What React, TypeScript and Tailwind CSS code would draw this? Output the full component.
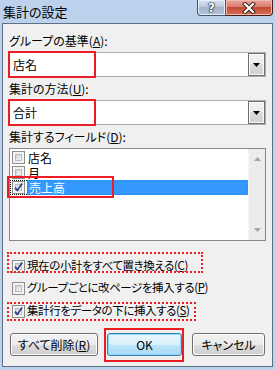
import React from "react";

const Box = ({ checked }: { checked?: boolean }) => (
  <span className="relative inline-block w-[13px] h-[13px] shrink-0 border border-[#8e8f8f] bg-[#f4f4f4] p-[2px]">
    <span className="block w-full h-full border border-[#b8bcc2] bg-gradient-to-br from-[#cfd2d6] to-[#f7f7f7]" />
    {checked && (
      <svg className="absolute left-[0px] top-[0px]" width="11" height="11" viewBox="0 0 11 11">
        <path d="M2 5.6 L4.3 8.4 L9.2 1.6" stroke="#2e3e86" strokeWidth="1.7" fill="none" />
      </svg>
    )}
  </span>
);

const Combo = ({ value }: { value: string }) => (
  <div className="relative h-[25px] border border-[#abadb3] bg-white flex items-center">
    <span className="pl-[3px] leading-[16px]">{value}</span>
    <div className="ml-auto h-full w-[17px] border border-[#707070] bg-[linear-gradient(#f2f2f2,#ebebeb_50%,#dddddd_50%,#cfcfcf)] shadow-[inset_0_0_0_1px_#fbfbfb] flex items-center justify-center">
      <svg width="7" height="4" viewBox="0 0 7 4">
        <path d="M0 0 H7 L3.5 4 Z" fill="#000" />
      </svg>
    </div>
    <div className="absolute left-[-2px] top-[-2px] w-[88px] h-[27px] border-2 border-[#ec1c24]" />
  </div>
);

const Item = ({ label, selected }: { label: string; selected?: boolean }) => (
  <div className="relative h-[15px] flex items-center pl-[2px]">
    <Box checked={selected} />
    <span
      className={
        selected
          ? "ml-[2px] flex-1 h-full flex items-center pl-[1px] leading-[13px] bg-[#3399ff] text-white border border-dotted border-[#cc6600]"
          : "ml-[2px] flex-1 h-full flex items-center pl-[1px] leading-[13px]"
      }
    >
      {label}
    </span>
    {selected && (
      <>
        <div className="absolute left-0 top-0 w-[17px] h-[15px] border-y border-l border-dotted border-black" />
        <div className="absolute left-[-3px] top-[-4px] w-[107px] h-[22px] border-2 border-[#ec1c24]" />
      </>
    )}
  </div>
);

const Btn = ({ children, w, isDefault }: { children: React.ReactNode; w: string; isDefault?: boolean }) => (
  <button
    className={
      isDefault
        ? "relative h-[23px] rounded-[3px] border border-[#3c7fb1] bg-[linear-gradient(#eaf6fd,#d9f0fc_50%,#bee6fd_50%,#a7d9f5)] shadow-[inset_0_0_0_1px_#8fdcf8] flex items-center justify-center " + w
        : "relative h-[23px] rounded-[3px] border border-[#707070] bg-[linear-gradient(#f2f2f2,#ebebeb_50%,#dddddd_50%,#cfcfcf)] shadow-[inset_0_0_0_1px_#fcfcfc] flex items-center justify-center " + w
    }
  >
    {children}
  </button>
);

export default function App() {
  return (
    <div className="w-[275px] h-[370px] flex flex-col bg-[#bcd2ec] text-[12px] text-black font-['Meiryo_UI','Noto_Sans_CJK_JP',sans-serif] [font-feature-settings:'palt']">
      <div className="h-[23px] flex items-start shrink-0">
        <span className="pl-[3px] h-[23px] flex items-center text-[13px]">集計の設定</span>
        <div className="ml-auto mr-[2px] flex">
          <div className="w-[29px] h-[16px] border border-t-0 border-[#45566e] rounded-bl-[4px] bg-[linear-gradient(#d5e0ed,#b9c9dc_50%,#9fb3cc_50%,#b4c6dc)] shadow-[inset_0_0_0_1px_#e6eef7] flex items-center justify-center">
            <span className="text-white font-bold text-[12px] leading-none font-['DejaVu_Sans',sans-serif] [text-shadow:0_0_1px_#000,0_0_1px_#000,0_0_2px_#223]">?</span>
          </div>
          <div className="w-[47px] h-[16px] border border-t-0 border-l-0 border-[#4b1a12] rounded-br-[4px] bg-[linear-gradient(#e9a99c,#d8766a_50%,#c44a35_50%,#d66e55)] shadow-[inset_0_0_0_1px_#f0b8ac] flex items-center justify-center">
            <svg width="14" height="12" viewBox="0 0 14 12">
              <path d="M3 2 L11 10 M11 2 L3 10" stroke="#3a1a14" strokeWidth="4" strokeLinecap="square" />
              <path d="M3 2 L11 10 M11 2 L3 10" stroke="#fff" strokeWidth="2.2" strokeLinecap="square" />
            </svg>
          </div>
        </div>
      </div>

      <div className="flex-1 mx-[2px] mb-[3px] border border-[#5f6f82] bg-[#f0f0f0] px-[6px] flex flex-col">
        <div className="mt-[9px] leading-[16px]">
          グループの基準(<span className="underline">A</span>):
        </div>
        <div className="mt-[3px]">
          <Combo value="店名" />
        </div>
        <div className="mt-[4px] leading-[16px]">
          集計の方法(<span className="underline">U</span>):
        </div>
        <div className="mt-[3px]">
          <Combo value="合計" />
        </div>
        <div className="mt-[4px] leading-[16px]">
          集計するフィールド(<span className="underline">D</span>):
        </div>
        <div className="mt-[3px] h-[93px] border border-[#828790] bg-white flex">
          <div className="flex-1 pt-[1px] flex flex-col">
            <Item label="店名" />
            <Item label="月" />
            <Item label="売上高" selected />
          </div>
          <div className="w-[17px] bg-[#ececec] border-l border-[#f7f7f7] flex flex-col items-center justify-between py-[8px]">
            <svg width="7" height="4" viewBox="0 0 7 4">
              <path d="M3.5 0 L7 4 H0 Z" fill="#a3a3a3" />
            </svg>
            <svg width="7" height="4" viewBox="0 0 7 4">
              <path d="M0 0 H7 L3.5 4 Z" fill="#a3a3a3" />
            </svg>
          </div>
        </div>

        <div className="relative mt-[14px] h-[22px] flex items-center pl-[3px] text-[11.5px] tracking-[-0.4px]">
          <Box checked />
          <span className="ml-[2px]">
            現在の小計をすべて置き換える(<span className="underline">C</span>)
          </span>
          <div className="absolute left-[-2px] top-[-3px] w-[196px] h-[21px] border-2 border-dotted border-[#ec1c24]" />
        </div>
        <div className="h-[22px] flex items-center pl-[3px] text-[11.5px] tracking-[-0.4px]">
          <Box />
          <span className="ml-[2px]">
            グループごとに改ページを挿入する(<span className="underline">P</span>)
          </span>
        </div>
        <div className="relative mt-[1px] h-[22px] flex items-center pl-[3px] text-[11.5px] tracking-[-0.4px]">
          <Box checked />
          <span className="ml-[2px]">
            集計行をデータの下に挿入する(<span className="underline">S</span>)
          </span>
          <div className="absolute left-[-2px] top-[2px] w-[189px] h-[19px] border-2 border-dotted border-[#ec1c24]" />
        </div>

        <div className="mt-[11px] flex">
          <div className="ml-[1px]">
            <Btn w="w-[88px]">
              <span>
                すべて削除(<span className="underline">R</span>)
              </span>
            </Btn>
          </div>
          <div className="relative ml-[9px]">
            <Btn w="w-[75px]" isDefault>
              OK
            </Btn>
            <div className="absolute left-[-3px] top-[-5px] w-[80px] h-[34px] border-2 border-[#ec1c24]" />
          </div>
          <div className="ml-[10px]">
            <Btn w="w-[73px]">キャンセル</Btn>
          </div>
        </div>
      </div>
    </div>
  );
}
